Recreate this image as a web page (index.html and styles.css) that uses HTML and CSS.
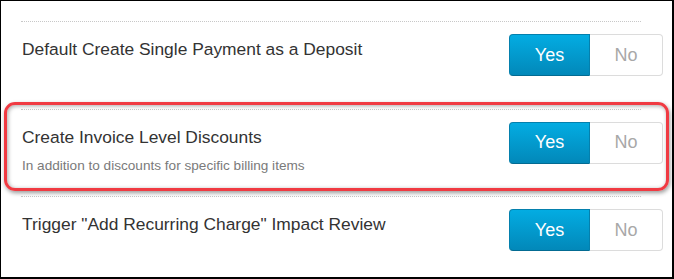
FILE: index.html
```
<!DOCTYPE html>
<html lang="en">
<head>
<meta charset="UTF-8">
<title>Billing settings</title>
<link rel="stylesheet" href="styles.css">
</head>
<body>

<div class="frame">
  <div class="settings">

    <!-- single payment -->
    <div class="setting">
      <div class="label">
        <div class="title">Default Create Single Payment as a Deposit</div>
      </div>
      <div class="toggle">
        <span class="opt yes on">Yes</span>
        <span class="opt no">No</span>
      </div>
    </div>

    <!-- invoice discounts -->
    <div class="setting">
      <div class="label">
        <div class="title">Create Invoice Level Discounts</div>
        <div class="hint">In addition to discounts for specific billing items</div>
      </div>
      <div class="toggle">
        <span class="opt yes on">Yes</span>
        <span class="opt no">No</span>
      </div>
    </div>

    <!-- recurring charge -->
    <div class="setting">
      <div class="label">
        <div class="title">Trigger "Add Recurring Charge" Impact Review</div>
      </div>
      <div class="toggle">
        <span class="opt yes on">Yes</span>
        <span class="opt no">No</span>
      </div>
    </div>

  </div>

  <!-- annotation box -->
  <div class="highlight"></div>
</div>

</body>
</html>
```

FILE: styles.css
```
* {
  margin: 0;
  padding: 0;
  box-sizing: border-box;
}

html, body {
  width: 674px;
  height: 279px;
  background: #fff;
  overflow: hidden;
}

body {
  font-family: 'Liberation Sans', Arial, sans-serif;
  color: #333;
}

.frame {
  position: relative;
  width: 674px;
  height: 279px;
  border-style: solid;
  border-color: #000;
  border-width: 1px 2px 2px 1px;
  padding: 20px 9px 0 20px;
}

/* rows */
.setting {
  display: flex;
  justify-content: space-between;
  align-items: flex-start;
  height: 87.5px;
  padding-top: 13px;
  position: relative;
}

.setting::before {
  content: "";
  position: absolute;
  top: 0; left: 0; right: 22px;
  border-top: 1px dotted #c8c8c8;
}

.label {
  padding-top: 4px;
  padding-left: 1px;
}

.title {
  font-size: 17.4px;
  line-height: 22px;
  color: #333;
}

.hint {
  font-size: 13.6px;
  line-height: 18px;
  margin-top: 9px;
  color: #7a7a7a;
}

/* yes / no switch */
.toggle {
  display: flex;
  height: 42px;
}

.opt {
  display: flex;
  align-items: center;
  justify-content: center;
  font-size: 18px;
  height: 100%;
}

.opt.yes {
  width: 81px;
  color: #fff;
  background: linear-gradient(#03ace2, #0288b9);
  border: 1px solid #0480ad;
  border-bottom-color: #036b92;
  border-radius: 4px 0 0 4px;
}

.opt.no {
  width: 73px;
  color: #a8a8a8;
  background: #fff;
  border: 1px solid #dcdcdc;
  border-left: none;
  border-radius: 0 4px 4px 0;
}

/* red callout */
.highlight {
  position: absolute;
  left: 3px;
  top: 101px;
  width: 665px;
  height: 89px;
  border: 3px solid #f03a42;
  border-radius: 11px;
  box-shadow: 1px 2px 4px rgba(0,0,0,0.4), inset 1px 1px 4px rgba(0,0,0,0.35);
}
```
